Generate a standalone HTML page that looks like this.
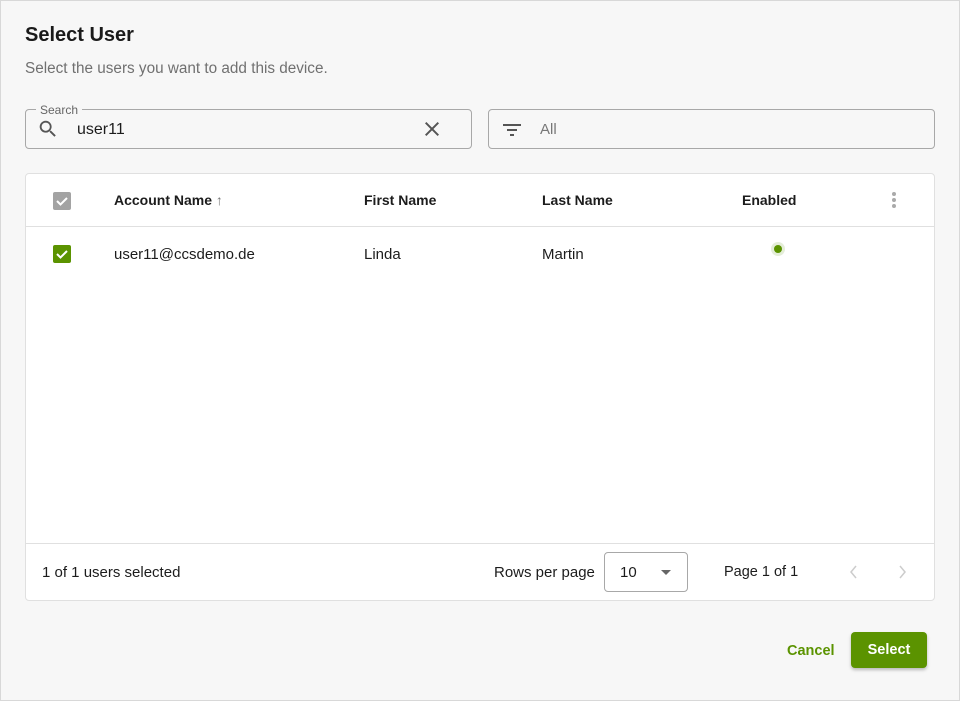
<!DOCTYPE html>
<html><head><style>
*{box-sizing:border-box;margin:0;padding:0}
body{width:960px;height:701px;background:#f7f7f7;font-family:"Liberation Sans",sans-serif;color:#1c1c1c;position:relative;overflow:hidden;box-shadow:inset 0 0 0 1px #d8d8d8}
.a{position:absolute}
h1{position:absolute;left:25px;top:24px;font-size:20px;font-weight:bold;color:#1a1a1a}
.sub{left:25px;top:60px;font-size:15.3px;color:#707070}
.field{border:1px solid #a8a8a8;border-radius:4px;height:40px}
.tbl{left:25px;top:173px;width:910px;height:428px;background:#fff;border:1px solid #e0e0e0;border-radius:4px}
.th{font-size:14px;font-weight:bold;top:18px}
.td{font-size:15px;top:72px}
.cb{width:18px;height:18px;border-radius:2px}
</style></head><body>
<h1>Select User</h1>
<div class="a sub">Select the users you want to add this device.</div>
<div class="a field" style="left:25px;top:109px;width:447px"></div>
<div class="a" style="left:36px;top:103px;background:#f7f7f7;padding:0 4px;font-size:12px;color:#666">Search</div>
<svg class="a" style="left:37px;top:118px" width="22" height="22" viewBox="0 0 24 24"><path d="M15.5 14h-.8l-.3-.3A6.5 6.5 0 1 0 9.5 16a6.5 6.5 0 0 0 4.2-1.6l.3.3v.8l5 5 1.5-1.5-5-5zm-6 0a4.5 4.5 0 1 1 0-9 4.5 4.5 0 0 1 0 9z" fill="#555"/></svg>
<div class="a" style="left:77px;top:121px;font-size:16px">user11</div>
<svg class="a" style="left:420px;top:117px" width="24" height="24" viewBox="0 0 24 24"><path d="M19 6.4L17.6 5 12 10.6 6.4 5 5 6.4 10.6 12 5 17.6 6.4 19 12 13.4 17.6 19 19 17.6 13.4 12z" fill="#555"/></svg>
<div class="a field" style="left:488px;top:109px;width:447px"></div>
<svg class="a" style="left:500px;top:118px" width="24" height="24" viewBox="0 0 24 24"><path d="M3 6h18v2H3zm4 5h10v2H7zm3 5h4v2h-4z" fill="#555"/></svg>
<div class="a" style="left:540px;top:121px;font-size:15px;color:#777">All</div>
<div class="a tbl">
<div class="a cb" style="left:27px;top:18px;background:#a3a3a3"><svg width="18" height="18" viewBox="0 0 18 18"><path d="M4 9l3.5 3.5L14 6" stroke="#fff" stroke-width="2" fill="none"/></svg></div>
<div class="a th" style="left:88px">Account Name <span style="color:#777">↑</span></div>
<div class="a th" style="left:338px">First Name</div>
<div class="a th" style="left:516px">Last Name</div>
<div class="a th" style="left:716px">Enabled</div>
<svg class="a" style="left:864px;top:16px" width="8" height="20"><circle cx="4" cy="4" r="2" fill="#aaa"/><circle cx="4" cy="10" r="2" fill="#aaa"/><circle cx="4" cy="16" r="2" fill="#aaa"/></svg>
<div class="a" style="left:0;top:52px;width:908px;height:1px;background:#e0e0e0"></div>
<div class="a cb" style="left:27px;top:71px;background:#5b9300"><svg width="18" height="18" viewBox="0 0 18 18"><path d="M4 9l3.5 3.5L14 6" stroke="#fff" stroke-width="2" fill="none"/></svg></div>
<div class="a td" style="left:88px">user11@ccsdemo.de</div>
<div class="a td" style="left:338px">Linda</div>
<div class="a td" style="left:516px">Martin</div>
<div class="a" style="left:745px;top:68px;width:14px;height:14px;border-radius:50%;background:#e4edd8"><div style="margin:3px;width:8px;height:8px;border-radius:50%;background:#5b9300"></div></div>
<div class="a" style="left:0;top:369px;width:908px;height:1px;background:#e0e0e0"></div>
<div class="a" style="left:16px;top:390px;font-size:15px">1 of 1 users selected</div>
<div class="a" style="left:468px;top:390px;font-size:15px">Rows per page</div>
<div class="a" style="left:578px;top:378px;width:84px;height:40px;border:1px solid #a8a8a8;border-radius:4px"></div>
<div class="a" style="left:594px;top:390px;font-size:15px">10</div>
<div class="a" style="left:635px;top:396px;width:0;height:0;border-left:5px solid transparent;border-right:5px solid transparent;border-top:5px solid #666"></div>
<div class="a" style="left:698px;top:390px;font-size:14.5px">Page 1 of 1</div>
<svg class="a" style="left:820px;top:388px" width="16" height="20" viewBox="0 0 16 20"><path d="M10 4L5 10l5 6" stroke="#ccc" stroke-width="1.5" fill="none"/></svg>
<svg class="a" style="left:868px;top:388px" width="16" height="20" viewBox="0 0 16 20"><path d="M6 4l5 6-5 6" stroke="#ccc" stroke-width="1.5" fill="none"/></svg>
</div>
<div class="a" style="left:787px;top:643px;font-size:14.5px;font-weight:bold;color:#5b9300">Cancel</div>
<div class="a" style="left:851px;top:632px;width:76px;height:36px;background:#5b9300;border-radius:4px;color:#fff;font-size:14.5px;font-weight:bold;text-align:center;line-height:37px;box-shadow:0 2px 3px rgba(0,0,0,.25)">Select</div>
</body></html>
